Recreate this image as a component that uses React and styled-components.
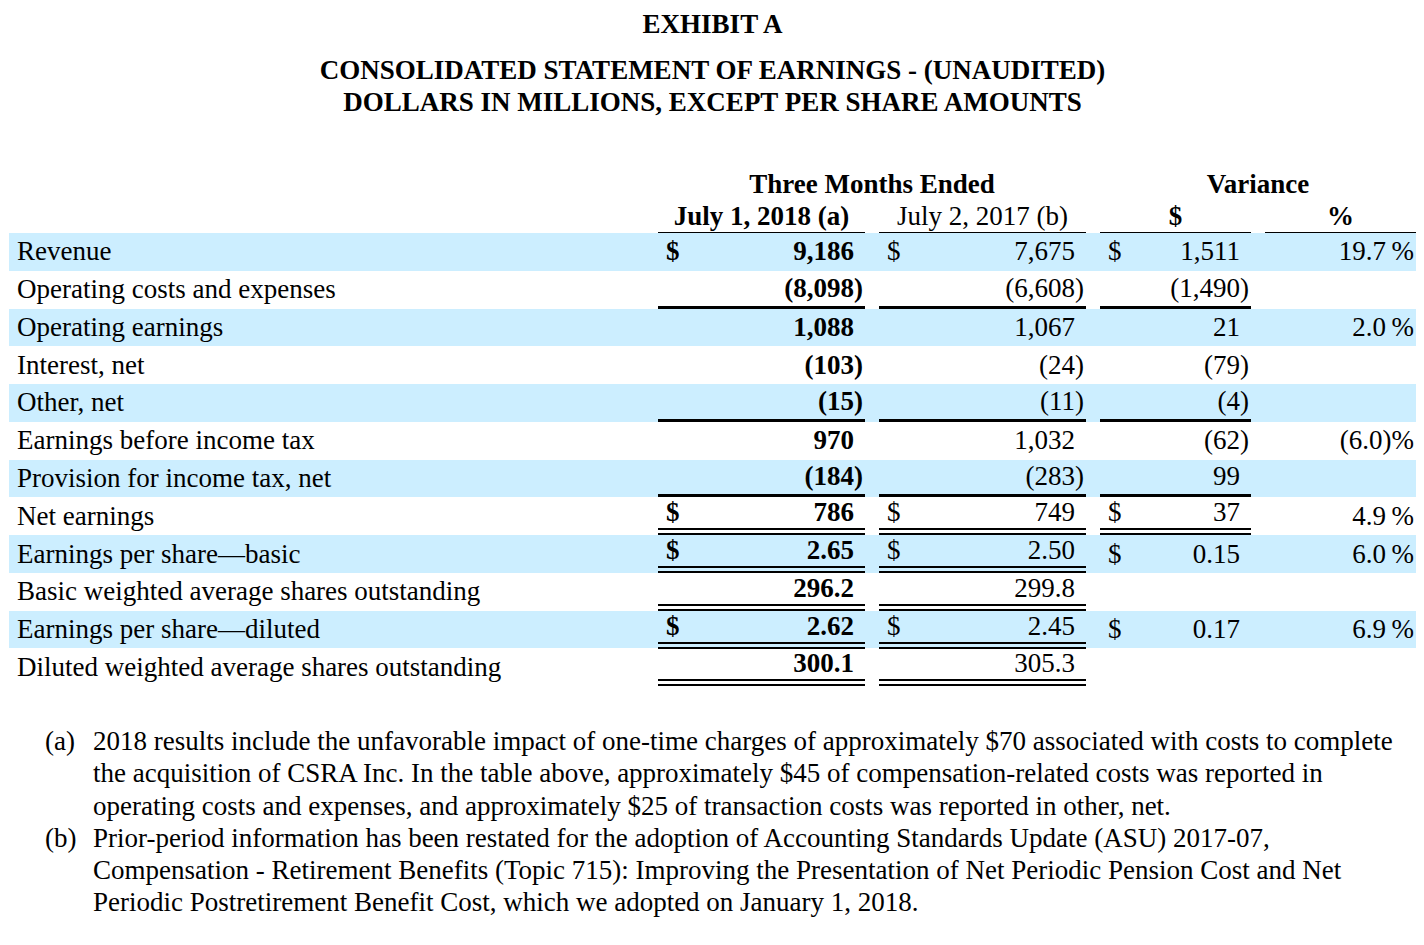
import React from 'react'
import styled, { createGlobalStyle } from 'styled-components'

const GlobalStyle = createGlobalStyle`
  html, body {
    margin: 0;
    padding: 0;
    background: #ffffff;
  }
  body {
    font-family: "Liberation Serif", "Times New Roman", serif;
    color: #000000;
  }
`

const rows = [
  { label: 'Revenue', blue: true, a: '9,186', b: '7,675', v: '1,511', p: '19.7', dollar: true, vDollar: true },
  { label: 'Operating costs and expenses', a: '(8,098)', b: '(6,608)', v: '(1,490)', rule: 'single', vRule: 'single' },
  { label: 'Operating earnings', blue: true, a: '1,088', b: '1,067', v: '21', p: '2.0' },
  { label: 'Interest, net', a: '(103)', b: '(24)', v: '(79)' },
  { label: 'Other, net', blue: true, a: '(15)', b: '(11)', v: '(4)', rule: 'single', vRule: 'single' },
  { label: 'Earnings before income tax', a: '970', b: '1,032', v: '(62)', p: '(6.0)' },
  { label: 'Provision for income tax, net', blue: true, a: '(184)', b: '(283)', v: '99', rule: 'single', vRule: 'single' },
  { label: 'Net earnings', a: '786', b: '749', v: '37', p: '4.9', dollar: true, vDollar: true, rule: 'double', vRule: 'double' },
  { label: 'Earnings per share\u2014basic', blue: true, a: '2.65', b: '2.50', v: '0.15', p: '6.0', dollar: true, vDollar: true, rule: 'double' },
  { label: 'Basic weighted average shares outstanding', a: '296.2', b: '299.8', rule: 'double' },
  { label: 'Earnings per share\u2014diluted', blue: true, a: '2.62', b: '2.45', v: '0.17', p: '6.9', dollar: true, vDollar: true, rule: 'double' },
  { label: 'Diluted weighted average shares outstanding', a: '300.1', b: '305.3', rule: 'double' },
]

// negative figures: the closing paren hangs in its own slot
const split = (value) => {
  if (!value) return ['', '']
  if (value.endsWith(')')) return [value.slice(0, -1), ')']
  return [value, '']
}

const AmountCell = ({ value, dollar, bold, rule }) => {
  const [num, paren] = split(value)
  return (
    <Amount $bold={bold} $rule={rule}>
      <Dollar>{dollar ? '$' : ''}</Dollar>
      <Figure>
        {num}
        <Paren>{paren}</Paren>
      </Figure>
    </Amount>
  )
}

const PercentCell = ({ value }) => {
  if (!value) return <Percent />
  const [num, paren] = split(value)
  return (
    <Percent>
      {num}
      <PctSign>{paren ? ')%' : '%'}</PctSign>
    </Percent>
  )
}

const App = () => {
  return (
    <Page>
      <GlobalStyle />
      <Exhibit>EXHIBIT A</Exhibit>
      <Heading>
        CONSOLIDATED STATEMENT OF EARNINGS - (UNAUDITED)
        <br />
        DOLLARS IN MILLIONS, EXCEPT PER SHARE AMOUNTS
      </Heading>

      <Table>
        <HeadRow>
          <span />
          <GroupTitle $span={2}>Three Months Ended</GroupTitle>
          <GroupTitle $span={2}>Variance</GroupTitle>
        </HeadRow>
        <HeadRow>
          <span />
          <ColTitle $bold>July 1, 2018 (a)</ColTitle>
          <ColTitle>July 2, 2017 (b)</ColTitle>
          <ColTitle $bold>$</ColTitle>
          <ColTitle $bold>%</ColTitle>
        </HeadRow>

        {rows.map((row) => (
          <Row key={row.label} $blue={row.blue}>
            <Label>{row.label}</Label>
            <AmountCell value={row.a} dollar={row.dollar} bold rule={row.rule} />
            <AmountCell value={row.b} dollar={row.dollar} rule={row.rule} />
            {row.v ? (
              <AmountCell value={row.v} dollar={row.vDollar} rule={row.vRule} />
            ) : (
              <span />
            )}
            <PercentCell value={row.p} />
          </Row>
        ))}
      </Table>

      <Notes>
        <Marker>(a)</Marker>
        <NoteText>
          2018 results include the unfavorable impact of one-time charges of approximately $70 associated with costs to complete
          <br />
          the acquisition of CSRA Inc. In the table above, approximately $45 of compensation-related costs was reported in
          <br />
          operating costs and expenses, and approximately $25 of transaction costs was reported in other, net.
        </NoteText>
        <Marker>(b)</Marker>
        <NoteText>
          Prior-period information has been restated for the adoption of Accounting Standards Update (ASU) 2017-07,
          <br />
          Compensation - Retirement Benefits (Topic 715): Improving the Presentation of Net Periodic Pension Cost and Net
          <br />
          Periodic Postretirement Benefit Cost, which we adopted on January 1, 2018.
        </NoteText>
      </Notes>
    </Page>
  )
}

const Page = styled.div`
  width: 1424px;
  height: 945px;
  box-sizing: border-box;
  padding: 8px 8px 0 9px;
  overflow: hidden;
`

const Exhibit = styled.div`
  text-align: center;
  font-weight: 700;
  font-size: 27px;
  line-height: 32px;
`

const Heading = styled.div`
  margin-top: 14px;
  text-align: center;
  font-weight: 700;
  font-size: 27px;
  line-height: 32px;
`

const Table = styled.div`
  margin-top: 50px;
  display: flex;
  flex-direction: column;
`

const gridCols = `
  display: grid;
  grid-template-columns: 1fr 207px 207px 151px 151px;
  column-gap: 14px;
`

const HeadRow = styled.div`
  ${gridCols}
  height: 32.5px;
  align-items: center;
  font-size: 27px;
`

const GroupTitle = styled.div`
  grid-column: span ${(p) => p.$span};
  text-align: center;
  font-weight: 700;
`

const ColTitle = styled.div`
  height: 100%;
  box-sizing: border-box;
  display: flex;
  align-items: center;
  justify-content: center;
  font-weight: ${(p) => (p.$bold ? 700 : 400)};
  border-bottom: 2px solid #000;
`

const Row = styled.div`
  ${gridCols}
  height: 37.75px;
  background: ${(p) => (p.$blue ? '#cceeff' : 'transparent')};
  font-size: 27px;
`

const Label = styled.div`
  display: flex;
  align-items: center;
  padding-left: 8px;
  white-space: nowrap;
`

const Amount = styled.div`
  display: flex;
  align-items: center;
  justify-content: space-between;
  box-sizing: border-box;
  padding-left: 8px;
  font-weight: ${(p) => (p.$bold ? 700 : 400)};
  border-bottom: ${(p) =>
    p.$rule === 'double' ? '7px double #000' : p.$rule === 'single' ? '3px solid #000' : 'none'};
`

const Dollar = styled.span``

const Figure = styled.span`
  display: flex;
  white-space: nowrap;
`

const Paren = styled.span`
  width: 11px;
`

const Percent = styled.div`
  display: flex;
  align-items: center;
  justify-content: flex-end;
  padding-right: 2px;
  white-space: nowrap;
`

const PctSign = styled.span`
  min-width: 28px;
  text-align: right;
`

const Notes = styled.div`
  margin-top: 39px;
  margin-left: 36px;
  display: grid;
  grid-template-columns: 48px auto;
  font-size: 27px;
  line-height: 32.3px;
`

const Marker = styled.div``

const NoteText = styled.div`
  white-space: nowrap;
`

export default App
